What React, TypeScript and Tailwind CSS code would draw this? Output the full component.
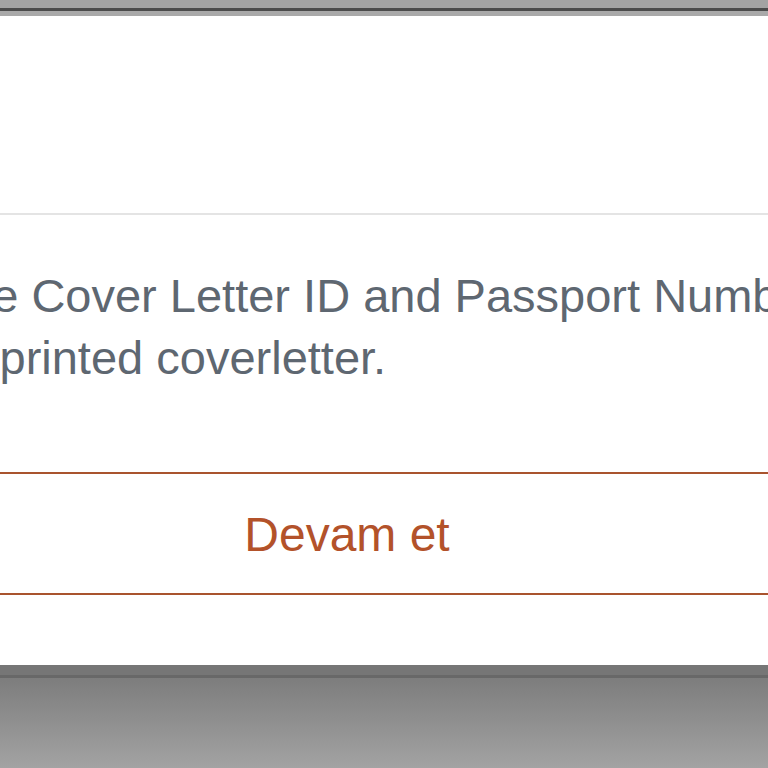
import React from 'react';

const sans = { fontFamily: '"Liberation Sans", Arial, sans-serif' };

export default function App() {
  return (
    <div className="w-[768px] h-[768px] overflow-hidden flex flex-col bg-[#a0a0a0]" style={sans}>
      {/* window chrome above the sheet */}
      <div className="h-[8px] bg-[#a3a3a3]" />
      <div className="h-[3px] bg-[#4b4b4b]" />
      <div className="h-[5px] bg-[#a9a9a9]" />

      {/* modal sheet */}
      <div className="h-[649px] bg-white flex flex-col shrink-0">
        <div className="h-[199px] border-b-2 border-[#e4e4e4]" />

        <div className="pt-[50px] text-[47px] leading-[62px] text-[#5e6771] whitespace-nowrap">
          <div className="ml-[-47px]">the Cover Letter ID and Passport Number written on</div>
          <div className="ml-[-105px]">your printed coverletter.</div>
        </div>

        <div className="mt-[83px] mx-[-24px]">
          <button className="w-full h-[123px] border-2 border-[#a9542e] rounded-md flex items-center justify-center text-[48px] text-[#b3522a] pr-[74px] pt-[2px]">
            Devam et
          </button>
        </div>
      </div>

      {/* backdrop below */}
      <div className="h-[10px] bg-[#767676]" />
      <div className="h-[3px] bg-[#686868]" />
      <div className="flex-1 bg-gradient-to-b from-[#7d7d7d] to-[#a3a3a3]" />
    </div>
  );
}
